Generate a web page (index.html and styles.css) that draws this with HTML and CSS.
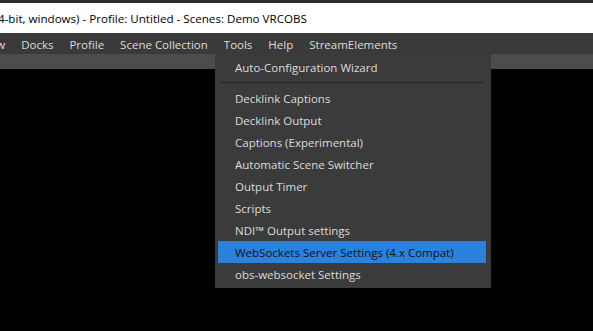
FILE: index.html
```
<!DOCTYPE html>
<html lang="en">
<head>
  <meta charset="UTF-8" />
  <title>OBS Tools Menu</title>
  <link rel="stylesheet" href="styles.css">
</head>
<body>
  <div class="window">
    <div class="top-edge"></div>
    <div class="titlebar">
      <span class="title">4-bit, windows) - Profile: Untitled - Scenes: Demo VRCOBS</span>
    </div>

    <nav class="menubar">
      <span class="menu-item cut">View</span>
      <span class="menu-item">Docks</span>
      <span class="menu-item">Profile</span>
      <span class="menu-item">Scene Collection</span>
      <span class="menu-item">Tools</span>
      <span class="menu-item">Help</span>
      <span class="menu-item">StreamElements</span>
    </nav>

    <div class="toolstrip"></div>
    <div class="preview"></div>

    <!-- Tools dropdown -->
    <ul class="dropdown">
      <li>Auto-Configuration Wizard</li>
      <li class="sep"></li>
      <li>Decklink Captions</li>
      <li>Decklink Output</li>
      <li>Captions (Experimental)</li>
      <li>Automatic Scene Switcher</li>
      <li>Output Timer</li>
      <li>Scripts</li>
      <li>NDI™ Output settings</li>
      <li class="active">WebSockets Server Settings (4.x Compat)</li>
      <li>obs-websocket Settings</li>
    </ul>
  </div>
</body>
</html>
```

FILE: styles.css
```
/* Window */
body {
  margin: 0;
  background: #000;
  font-family: 'Open Sans', 'Noto Sans', sans-serif;
  font-size: 11.5px;
}

.window {
  position: relative;
  width: 593px;
  height: 331px;
  overflow: hidden;
  background: #000;
}

.top-edge {
  height: 3px;
  background: #2d2d2d;
}

.titlebar {
  height: 30px;
  background: #fff;
  color: #000;
  display: flex;
  align-items: center;
  white-space: nowrap;
}

.title {
  margin-left: -2px;
  font-size: 11.6px;
}

/* Menu bar */
.menubar {
  height: 21px;
  padding-top: 1px;
  box-sizing: border-box;
  background: #3a3a3a;
  display: flex;
  align-items: center;
  color: #dcdcdc;
  white-space: nowrap;
}

.menu-item {
  padding: 0 8px;
}

.menu-item.cut {
  margin-left: -20px;
  padding-left: 0;
}

.toolstrip {
  height: 15px;
  background: #4c4c4c;
}

.preview {
  height: 262px;
  background: #000;
}

/* Dropdown */
.dropdown {
  position: absolute;
  left: 215px;
  top: 53px;
  width: 276px;
  box-sizing: border-box;
  margin: 0;
  padding: 3px 5px 3px 3px;
  list-style: none;
  background: #3b3b3b;
  color: #dcdcdc;
}

.dropdown li {
  height: 22px;
  line-height: 23px;
  padding-left: 17px;
  white-space: nowrap;
}

.dropdown li.sep {
  height: 1px;
  margin: 4px 2px 4px 2px;
  padding: 0;
  background: #262626;
}

.dropdown li.active {
  background: #2a82da;
  color: #111;
}
```
